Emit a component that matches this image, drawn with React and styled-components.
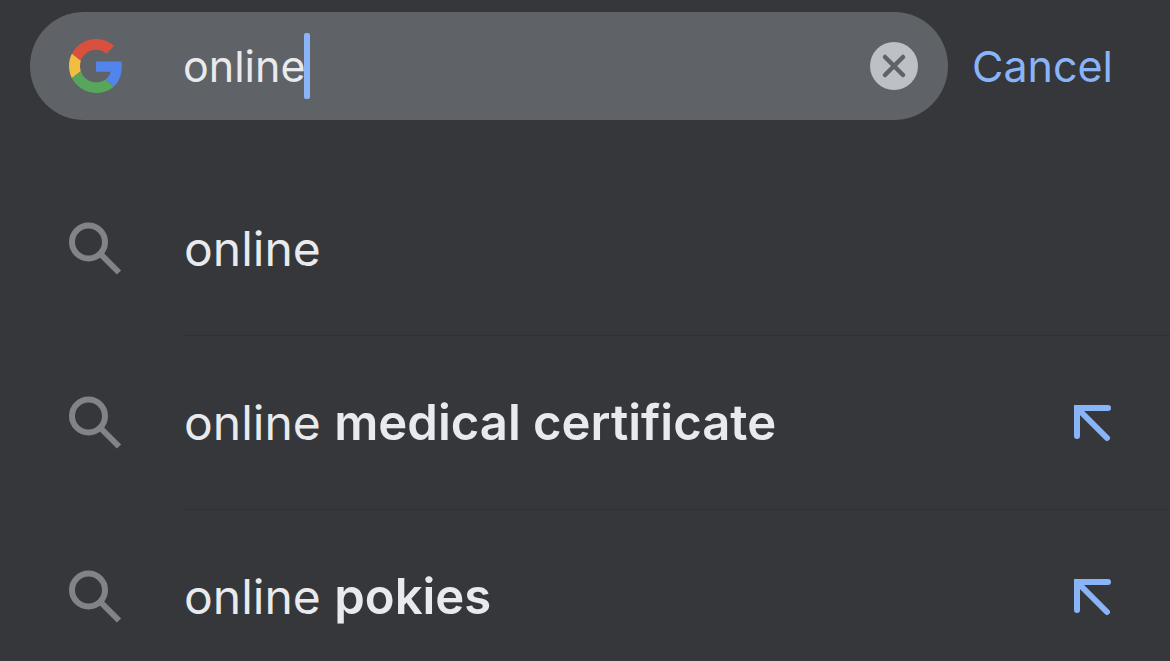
import React, { useState } from "react";
import styled, { createGlobalStyle } from "styled-components";

const GlobalStyle = createGlobalStyle`
  * {
    box-sizing: border-box;
  }
  body {
    margin: 0;
    background-color: #36373a;
    color: #e8eaed;
    font-family: Inter, "Liberation Sans", sans-serif;
  }
`;

const Page = styled.main`
  height: 100vh;
  overflow: hidden;
`;

const SearchBar = styled.form`
  display: flex;
  align-items: center;
  gap: 24px;
  padding: 12px 57px 42px 30px;
`;

const Field = styled.label`
  flex: 1;
  min-width: 0;
  height: 108px;
  display: flex;
  align-items: center;
  padding: 0 30px 0 39px;
  border-radius: 54px;
  background-color: #5f6266;
`;

const Query = styled.div`
  flex: 1;
  min-width: 0;
  display: flex;
  align-items: center;
  margin-left: 60px;
`;

const QueryInput = styled.input`
  field-sizing: content;
  padding: 0;
  border: 0;
  outline: 0;
  background: none;
  color: inherit;
  caret-color: transparent;
  font: inherit;
  font-size: 43px;
  line-height: 64px;
`;

const Caret = styled.span`
  width: 6px;
  height: 66px;
  margin-left: -2px;
  border-radius: 2px;
  background-color: #8ab4f8;
`;

const IconButton = styled.button`
  display: flex;
  padding: 0;
  border: 0;
  background: none;
  cursor: pointer;
`;

const CancelButton = styled.button`
  padding: 0;
  border: 0;
  background: none;
  color: #8ab4f8;
  font: inherit;
  font-size: 43px;
  line-height: 64px;
  cursor: pointer;
`;

const Suggestions = styled.ul`
  margin: 0;
  padding: 0;
  list-style: none;
`;

const Row = styled.li`
  display: flex;
  align-items: center;
  padding-left: 68px;
`;

const RowBody = styled.div`
  flex: 1;
  height: 174px;
  display: flex;
  align-items: center;
  justify-content: space-between;
  margin-left: 62px;
  padding-right: 59px;
  border-bottom: 1px solid #2f3033;
`;

const RowText = styled.span`
  font-size: 48px;
  line-height: 64px;

  b {
    font-size: 49px;
    font-weight: 600;
  }
`;

function GoogleLogo() {
  return (
    <svg width="54" height="54" viewBox="0 0 48 48" aria-hidden="true">
      <path fill="#d9503f" d="M24 9.5c3.54 0 6.71 1.22 9.21 3.6l6.85-6.85C35.9 2.38 30.47 0 24 0 14.62 0 6.51 5.38 2.56 13.22l7.98 6.19C12.43 13.72 17.74 9.5 24 9.5z" />
      <path fill="#5285ec" d="M46.98 24.55c0-1.57-.15-3.09-.38-4.55H24v9.02h12.94c-.58 2.96-2.26 5.48-4.78 7.18l7.73 6c4.51-4.18 7.09-10.36 7.09-17.65z" />
      <path fill="#f3bd42" d="M10.53 28.59c-.48-1.45-.76-2.99-.76-4.59s.27-3.14.76-4.59l-7.98-6.19C.92 16.46 0 20.12 0 24c0 3.88.92 7.54 2.56 10.78l7.97-6.19z" />
      <path fill="#58a55c" d="M24 48c6.48 0 11.93-2.13 15.89-5.81l-7.73-6c-2.15 1.45-4.92 2.3-8.16 2.3-6.26 0-11.57-4.22-13.47-9.91l-7.98 6.19C6.51 42.62 14.62 48 24 48z" />
    </svg>
  );
}

function SearchIcon() {
  return (
    <svg width="54" height="54" viewBox="0 0 54 54" fill="none" stroke="#808387" strokeWidth="6" aria-hidden="true">
      <circle cx="20.5" cy="20" r="16.5" />
      <path d="M32 31.5L51 50.5" />
    </svg>
  );
}

function ClearIcon() {
  return (
    <svg width="48" height="48" viewBox="0 0 48 48" aria-hidden="true">
      <circle cx="24" cy="24" r="24" fill="#bdc0c5" />
      <path d="M15 15L33 33M33 15L15 33" stroke="#5f6266" strokeWidth="4.5" strokeLinecap="round" />
    </svg>
  );
}

function ArrowIcon() {
  return (
    <svg width="38" height="38" viewBox="0 0 38 38" fill="none" stroke="#8ab4f8" strokeWidth="6" strokeLinecap="round" aria-hidden="true">
      <path d="M4 32V4H35" />
      <path d="M6 6L34 34" />
    </svg>
  );
}

const suggestions = [
  { typed: "online" },
  { typed: "online", rest: "medical certificate" },
  { typed: "online", rest: "pokies" },
];

export default function App() {
  const [query, setQuery] = useState("online");

  return (
    <Page>
      <GlobalStyle />
      <SearchBar onSubmit={event => event.preventDefault()}>
        <Field>
          <GoogleLogo />
          <Query>
            <QueryInput
              type="text"
              aria-label="Search"
              autoComplete="off"
              value={query}
              onChange={event => setQuery(event.target.value)}
            />
            <Caret />
          </Query>
          <IconButton type="button" aria-label="Clear" onClick={() => setQuery("")}>
            <ClearIcon />
          </IconButton>
        </Field>
        <CancelButton type="button">Cancel</CancelButton>
      </SearchBar>

      <Suggestions>
        {suggestions.map(({ typed, rest }) => (
          <Row key={rest || typed}>
            <SearchIcon />
            <RowBody>
              <RowText>
                {typed} {rest && <b>{rest}</b>}
              </RowText>
              {rest && (
                <IconButton type="button" aria-label={`Use ${typed} ${rest}`}>
                  <ArrowIcon />
                </IconButton>
              )}
            </RowBody>
          </Row>
        ))}
      </Suggestions>
    </Page>
  );
}
